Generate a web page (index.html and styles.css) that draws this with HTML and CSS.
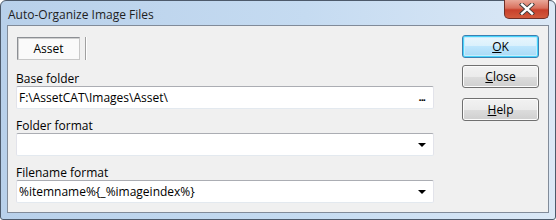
FILE: index.html
```html
<!DOCTYPE html>
<html lang="en">
<head>
<meta charset="UTF-8">
<title>Auto-Organize Image Files</title>
<link rel="stylesheet" href="styles.css">
</head>
<body>

<div class="window">
  <div class="titlebar">
    <span class="title">Auto-Organize Image Files</span>
    <div class="close-x">
      <svg width="16" height="12" viewBox="0 0 16 12">
        <path d="M3 1.5 L13 10.5 M13 1.5 L3 10.5" stroke="#3a3a3a" stroke-width="4.2" stroke-linecap="square"/>
        <path d="M3 1.5 L13 10.5 M13 1.5 L3 10.5" stroke="#fff" stroke-width="2.4" stroke-linecap="square"/>
      </svg>
    </div>
  </div>

  <div class="client">
    <div class="main">
      <div class="tabs">
        <div class="tab">Asset</div>
        <div class="tab-sep"></div>
      </div>

      <div class="field">
        <label>Base folder</label>
        <div class="input">
          <span>F:\AssetCAT\Images\Asset\</span>
          <span class="dots">&middot;&middot;&middot;</span>
        </div>
      </div>

      <div class="field">
        <label>Folder format</label>
        <div class="input">
          <span></span>
          <span class="arrow"></span>
        </div>
      </div>

      <div class="field">
        <label>Filename format</label>
        <div class="input">
          <span>%itemname%{_%imageindex%}</span>
          <span class="arrow"></span>
        </div>
      </div>
    </div>

    <div class="buttons">
      <button class="btn btn-default"><u>O</u>K</button>
      <button class="btn"><u>C</u>lose</button>
      <button class="btn btn-help"><u>H</u>elp</button>
    </div>
  </div>
</div>

</body>
</html>
```

FILE: styles.css
```css
body {
  margin: 0;
  padding: 0;
  font-family: "Open Sans", "Noto Sans", sans-serif;
  font-size: 11px;
  color: #000;
  background: #fff;
}
.window {
  box-sizing: border-box;
  width: 556px;
  height: 220px;
  border: 1px solid #4d5a6b;
  border-radius: 6px 6px 3px 3px;
  background: linear-gradient(to right, #b8d0ea, #c5dbf1 55%, #dbe8f6);
  display: flex;
  flex-direction: column;
}
.titlebar {
  height: 27px;
  display: flex;
  align-items: flex-start;
  padding-left: 7px;
}
.title {
  margin-top: 5px;
  font-size: 12px;
  color: #1e1e1e;
}
.close-x {
  margin-left: auto;
  margin-right: 6px;
  margin-top: -1px;
  width: 45px;
  height: 19px;
  box-sizing: border-box;
  border: 1px solid #6e2f27;
  border-top: none;
  border-radius: 0 0 5px 5px;
  background: linear-gradient(#e9a899, #d9705d 45%, #c8402b 55%, #d25a3c);
  display: flex;
  align-items: center;
  justify-content: center;
}
.client {
  margin: 0 6px 6px 6px;
  flex: 1;
  border: 1px solid #818b99;
  background: #f0f0f0;
  display: flex;
  padding: 0 9px 0 8px;
}
.main {
  width: 418px;
  display: flex;
  flex-direction: column;
}
.tabs {
  display: flex;
  margin-top: 11px;
  margin-bottom: 11px;
}
.tab {
  box-sizing: border-box;
  width: 63px;
  height: 23px;
  margin-left: 1px;
  border: 1px solid #8c8f94;
  border-right-color: #c8c8c8;
  border-bottom-color: #c8c8c8;
  background: #fafafa;
  box-shadow: inset 1px 1px 0 #cfcfcf;
  display: flex;
  align-items: center;
  justify-content: center;
  font-size: 12px;
}
.tab-sep {
  width: 1px;
  height: 23px;
  margin-left: 5px;
  background: #a0a0a0;
  border-right: 1px solid #fff;
}
.field {
  display: flex;
  flex-direction: column;
  margin-bottom: 9px;
}
.field label {
  height: 15px;
  line-height: 15px;
  font-size: 12px;
}
.input {
  box-sizing: border-box;
  height: 23px;
  border: 1px solid #e2e3ea;
  border-top-color: #abadb3;
  border-bottom-color: #e3e9ef;
  border-radius: 2px;
  background: #fff;
  display: flex;
  align-items: center;
  justify-content: space-between;
  padding: 0 6px 0 2px;
  font-size: 12px;
}
.dots {
  font-weight: bold;
  letter-spacing: -1px;
  font-size: 11px;
  padding-right: 2px;
  padding-top: 3px;
}
.arrow {
  width: 0;
  height: 0;
  border-left: 4px solid transparent;
  border-right: 4px solid transparent;
  border-top: 4px solid #000;
  margin-right: 1px;
}
.buttons {
  margin-left: auto;
  display: flex;
  flex-direction: column;
  padding-top: 9px;
}
.btn {
  box-sizing: border-box;
  width: 77px;
  height: 23px;
  margin-bottom: 7px;
  border: 1px solid #707070;
  border-radius: 3px;
  background: linear-gradient(#f2f2f2, #ebebeb 50%, #dddddd 50%, #cfcfcf);
  box-shadow: inset 0 0 0 1px #fcfcfc;
  font-family: "Open Sans", "Noto Sans", sans-serif;
  font-size: 12px;
  color: #000;
  padding: 0;
}
.btn-default {
  border-color: #3c7fb1;
  background: linear-gradient(#eaf6fd, #d9f0fc 50%, #bee6fd 50%, #a7d9f5);
  box-shadow: inset 0 0 0 1px #48d4fb, inset 0 0 0 2px #c6ecfc;
}
.btn-help {
  margin-top: 3px;
}
.btn u {
  text-decoration-thickness: 1px;
}
```
